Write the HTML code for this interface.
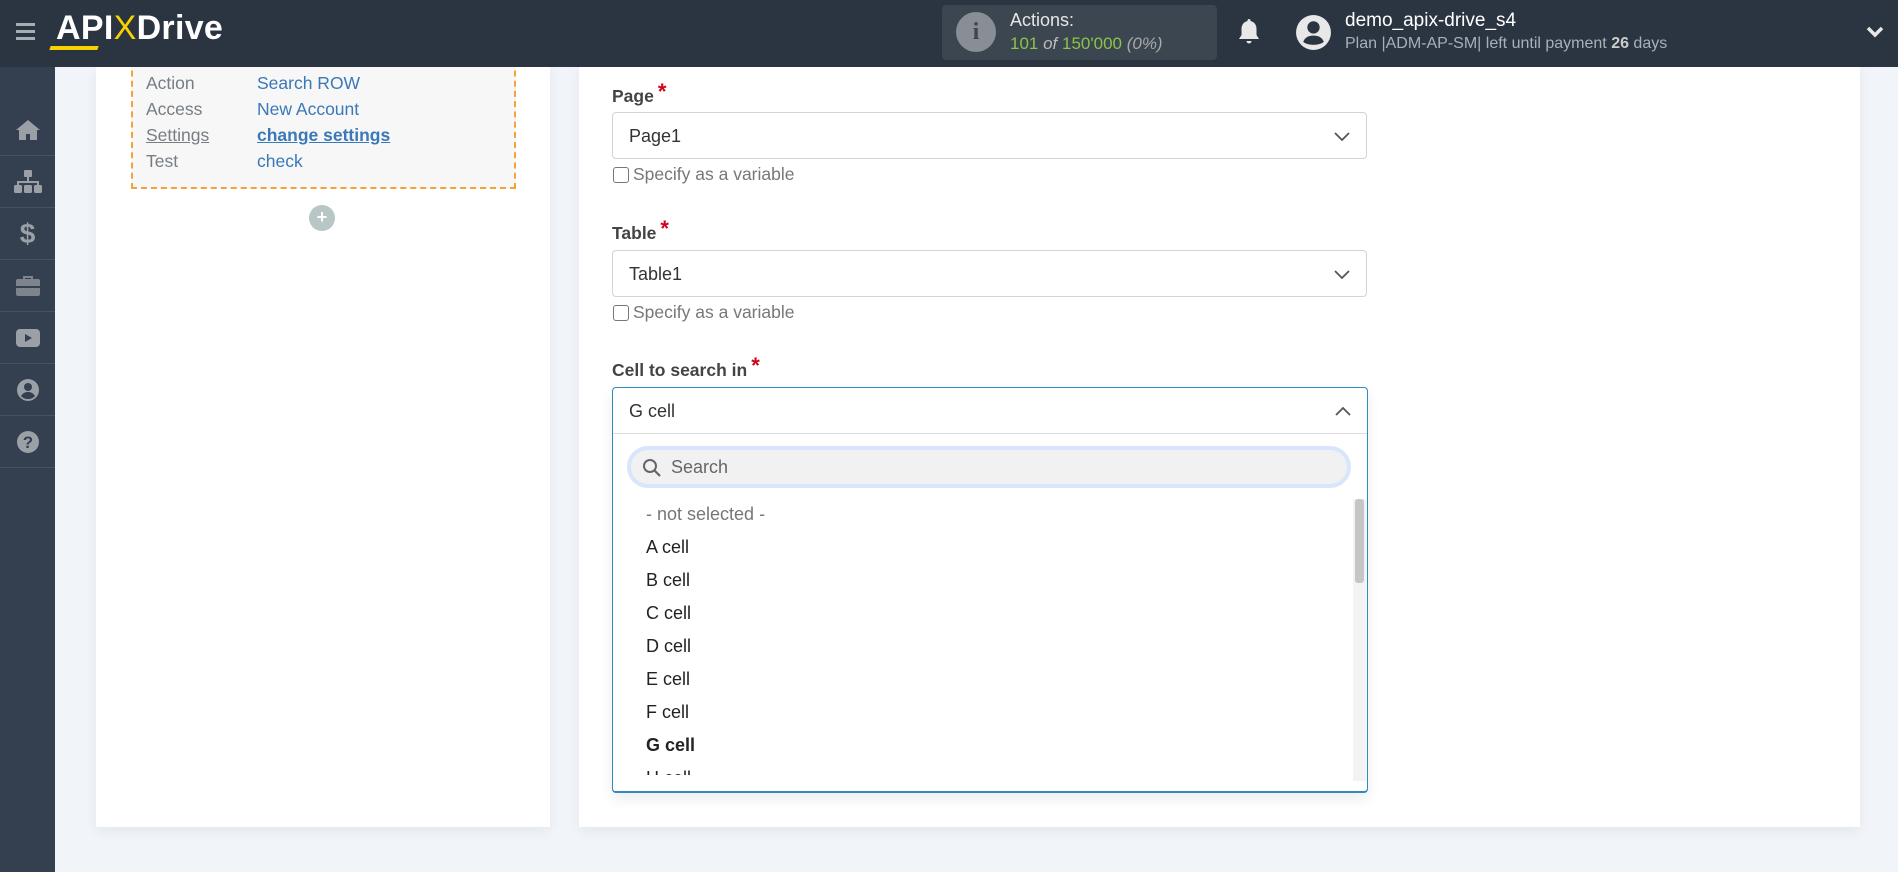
<!DOCTYPE html>
<html><head><meta charset="utf-8"><style>
*{box-sizing:border-box;margin:0;padding:0}
body{width:1898px;height:872px;overflow:hidden;background:#f1f4f9;font-family:"Liberation Sans",Roboto,sans-serif;position:relative}
.hdr{position:absolute;left:0;top:0;width:1898px;height:67px;background:#2b3441;z-index:10}
.side{position:absolute;left:0;top:67px;width:55px;height:805px;background:#343f4f;z-index:5}
.side .it{height:52px;border-bottom:1px solid #47525f;display:flex;align-items:center;justify-content:center}
.card{position:absolute;background:#fff;box-shadow:0 4px 12px rgba(0,0,0,.06)}
.dash{position:absolute;left:131px;top:50px;width:385px;height:139px;border:2px dashed #f5a236;border-top:none;background:#f7f7f7}
.row{position:absolute;font-size:17.5px}
.lab{color:#777d85}.val{color:#3a78b8}
.fl{position:absolute;left:612px;font-size:17.5px;font-weight:bold;color:#444}
.fl span{color:#d0021b;font-size:22px;position:relative;top:-3px;margin-left:4px}
.sel{position:absolute;left:612px;width:755px;height:47px;border:1px solid #d3d3d3;border-radius:4px;font-size:18px;color:#333;padding:13px 16px}
.chk{position:absolute;left:613px;font-size:17.5px;color:#777;display:flex;align-items:center}
.chk i{display:inline-block;width:16px;height:16px;border:1px solid #777;border-radius:3px;margin-right:4px}
.opt{position:absolute;left:646px;font-size:18px;color:#222}
</style></head><body>
<div class="hdr">
 <div style="position:absolute;left:16px;top:23px;width:19px">
  <div style="height:3px;background:#a7adb5;margin-bottom:4px"></div><div style="height:3px;background:#a7adb5;margin-bottom:4px"></div><div style="height:3px;background:#a7adb5"></div></div>
 <div style="position:absolute;left:56px;top:9px;font-size:34px;font-weight:bold;color:#fff;letter-spacing:0.3px">API<span style="color:#f7d200;font-weight:normal">X</span>Drive</div>
 <div style="position:absolute;left:50px;top:46px;width:48px;height:4px;background:#f7d200;transform:skewX(-20deg)"></div>
 <div style="position:absolute;left:942px;top:5px;width:275px;height:55px;background:#3b4650;border-radius:4px">
  <div style="position:absolute;left:14px;top:7px;width:40px;height:40px;border-radius:50%;background:#888e94;color:#3b4650;font-weight:bold;font-size:24px;text-align:center;line-height:40px;font-family:'Liberation Serif',serif">i</div>
  <div style="position:absolute;left:68px;top:5px;color:#e6e6e6;font-size:18px">Actions:</div>
  <div style="position:absolute;left:68px;top:29px;color:#8bc34a;font-size:17px">101 <i style="color:#bbb">of</i> 150'000 <i style="color:#aaa">(0%)</i></div>
 </div>
 <svg style="position:absolute;left:1237px;top:17px" width="24" height="30" viewBox="0 0 24 30"><path d="M12 2c-1 0-1.5.7-1.5 1.5v.5C6.5 5 4.5 8 4.5 12v6L2 22h20l-2.5-4v-6c0-4-2-7-6-8v-.5C13.5 2.7 13 2 12 2z" fill="#e8e8e8"/><path d="M9.5 24a2.5 2.5 0 0 0 5 0z" fill="#e8e8e8"/></svg>
 <svg style="position:absolute;left:1295px;top:14px" width="37" height="37" viewBox="0 0 36 36"><circle cx="18" cy="18" r="17" fill="#e8e8e8"/><circle cx="18" cy="13" r="6" fill="#2b3441"/><path d="M8 27c2-5 6-6 10-6s8 1 10 6c-2 2-6 3-10 3s-8-1-10-3z" fill="#2b3441"/></svg>
 <div style="position:absolute;left:1345px;top:10px;color:#fff;font-size:19px">demo_apix-drive_s4</div>
 <div style="position:absolute;left:1345px;top:35px;color:#a8b0b8;font-size:16px">Plan |ADM-AP-SM| left until payment <b style="color:#ccc">26</b> days</div>
 <svg style="position:absolute;left:1866px;top:26px" width="18" height="12" viewBox="0 0 18 12"><path d="M2 2l7 7 7-7" stroke="#e8e8e8" stroke-width="3.5" fill="none"/></svg>
</div>
<div class="side">
 <div class="it" style="height:37px;border-bottom:none"></div>
 <div class="it"><svg width="26" height="22" viewBox="0 0 26 22"><path d="M13 1L1 11h3v10h7v-6h4v6h7V11h3z" fill="#9aa0a6"/></svg></div>
 <div class="it"><svg width="30" height="24" viewBox="0 0 30 24"><rect x="11" y="0" width="8" height="7" rx="1" fill="#9aa0a6"/><path d="M15 7v5M5 16v-4h20v4" stroke="#9aa0a6" stroke-width="2" fill="none"/><rect x="1" y="15" width="8" height="8" rx="1.5" fill="#9aa0a6"/><rect x="11" y="15" width="8" height="8" rx="1.5" fill="#9aa0a6"/><rect x="21" y="15" width="8" height="8" rx="1.5" fill="#9aa0a6"/></svg></div>
 <div class="it"><span style="color:#9aa0a6;font-size:28px;font-weight:bold">$</span></div>
 <div class="it"><svg width="26" height="22" viewBox="0 0 26 22"><path d="M9 4V2h8v2" stroke="#7d848c" stroke-width="2" fill="none"/><rect x="1" y="4" width="24" height="17" rx="2" fill="#7d848c"/><rect x="1" y="11" width="24" height="2" fill="#343f4f"/></svg></div>
 <div class="it"><svg width="26" height="20" viewBox="0 0 26 20"><rect x="1" y="1" width="24" height="18" rx="4" fill="#9aa0a6"/><path d="M10 6v8l7-4z" fill="#343f4f"/></svg></div>
 <div class="it"><svg width="24" height="24" viewBox="0 0 24 24"><circle cx="12" cy="12" r="11" fill="#9aa0a6"/><circle cx="12" cy="9" r="4" fill="#343f4f"/><path d="M5 18c2-3 4-4 7-4s5 1 7 4c-2 2-4 3-7 3s-5-1-7-3z" fill="#343f4f"/></svg></div>
 <div class="it"><svg width="24" height="24" viewBox="0 0 24 24"><circle cx="12" cy="12" r="11" fill="#9aa0a6"/><text x="12" y="18" text-anchor="middle" font-family="Liberation Sans" font-weight="bold" font-size="17" fill="#343f4f">?</text></svg></div>
</div>
<div class="card" style="left:96px;top:67px;width:454px;height:760px"></div>
<div class="card" style="left:579px;top:67px;width:1281px;height:760px"></div>
<div class="dash"></div>
<div class="row lab" style="left:146px;top:73px">Action</div><div class="row val" style="left:257px;top:73px">Search ROW</div>
<div class="row lab" style="left:146px;top:99px">Access</div><div class="row val" style="left:257px;top:99px">New Account</div>
<div class="row lab" style="left:146px;top:125px;text-decoration:underline">Settings</div><div class="row val" style="left:257px;top:125px;text-decoration:underline;font-weight:bold">change settings</div>
<div class="row lab" style="left:146px;top:151px">Test</div><div class="row val" style="left:257px;top:151px">check</div>
<div style="position:absolute;left:309px;top:205px;width:26px;height:26px;border-radius:50%;background:#b8c6c6;color:#fff;text-align:center;line-height:25px;font-size:18px;font-weight:bold">+</div>

<div class="fl" style="top:82px">Page<span>*</span></div>
<div class="sel" style="top:112px">Page1<svg style="position:absolute;right:16px;top:19px" width="16" height="10" viewBox="0 0 16 10"><path d="M1 1l7 7 7-7" stroke="#555" stroke-width="1.8" fill="none"/></svg></div>
<div class="chk" style="top:164px"><i></i>Specify as a variable</div>
<div class="fl" style="top:219px">Table<span>*</span></div>
<div class="sel" style="top:250px">Table1<svg style="position:absolute;right:16px;top:19px" width="16" height="10" viewBox="0 0 16 10"><path d="M1 1l7 7 7-7" stroke="#555" stroke-width="1.8" fill="none"/></svg></div>
<div class="chk" style="top:302px"><i></i>Specify as a variable</div>
<div class="fl" style="top:356px">Cell to search in<span>*</span></div>
<div style="position:absolute;left:612px;top:387px;width:756px;height:406px;border:1.5px solid #2f8bbd;border-bottom-width:2.5px;border-radius:4px;background:#fff;box-shadow:0 6px 14px rgba(0,0,0,.08);overflow:hidden">
 <div style="height:46px;border-bottom:1px solid #ddd;font-size:18px;color:#333;padding:13px 16px;position:relative">G cell<svg style="position:absolute;right:16px;top:18px" width="16" height="10" viewBox="0 0 16 10"><path d="M1 9l7-7 7 7" stroke="#555" stroke-width="1.8" fill="none"/></svg></div>
 <div style="position:absolute;left:14px;top:58px;width:724px;height:42px;border-radius:21px;border:4px solid #d8e6fd;background:#f1f1f1">
  <svg style="position:absolute;left:11px;top:8px" width="20" height="20" viewBox="0 0 20 20"><circle cx="8" cy="8" r="6" stroke="#666" stroke-width="2" fill="none"/><path d="M12.5 12.5L18 18" stroke="#666" stroke-width="2.2"/></svg>
  <div style="position:absolute;left:40px;top:7px;font-size:18px;color:#666">Search</div></div>
 <div style="position:absolute;left:740px;top:111px;width:13px;height:282px;background:#f3f3f3"><div style="margin:0 2px;height:84px;background:#c6c6c6;border-radius:3px"></div></div>
</div>
<div class="opt" style="top:504px;color:#777">- not selected -</div>
<div class="opt" style="top:537px">A cell</div>
<div class="opt" style="top:570px">B cell</div>
<div class="opt" style="top:603px">C cell</div>
<div class="opt" style="top:636px">D cell</div>
<div class="opt" style="top:669px">E cell</div>
<div class="opt" style="top:702px">F cell</div>
<div class="opt" style="top:735px;font-weight:bold">G cell</div>
<div style="position:absolute;left:614px;top:768px;width:738px;height:22px;overflow:hidden"><div class="opt" style="left:32px;top:0">H cell</div></div>
<div style="position:absolute;left:614px;top:775px;width:738px;height:16px;background:#fff"></div>
</body></html>
